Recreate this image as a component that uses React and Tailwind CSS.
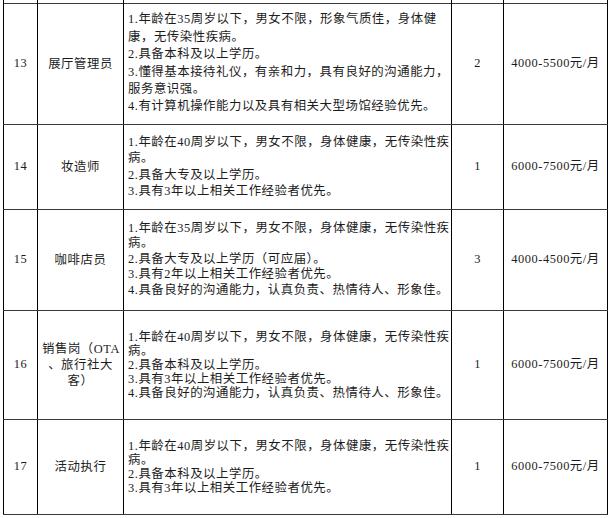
const rows = [
  {
    no: "13",
    name: ["展厅管理员"],
    lines: [
      "1.年龄在35周岁以下，男女不限，形象气质佳，身体健",
      "康，无传染性疾病。",
      "2.具备本科及以上学历。",
      "3.懂得基本接待礼仪，有亲和力，具有良好的沟通能力，",
      "服务意识强。",
      "4.有计算机操作能力以及具有相关大型场馆经验优先。",
    ],
    count: "2",
    pay: "4000-5500元/月",
    h: "h-[121px]",
    lh: "leading-[17.4px]",
  },
  {
    no: "14",
    name: ["妆造师"],
    lines: [
      "1.年龄在40周岁以下，男女不限，身体健康，无传染性疾",
      "病。",
      "2.具备大专及以上学历。",
      "3.具有3年以上相关工作经验者优先。",
    ],
    count: "1",
    pay: "6000-7500元/月",
    h: "h-[85px]",
    lh: "leading-[16.3px]",
  },
  {
    no: "15",
    name: ["咖啡店员"],
    lines: [
      "1.年龄在35周岁以下，男女不限，身体健康，无传染性疾",
      "病。",
      "2.具备大专及以上学历（可应届）。",
      "3.具有2年以上相关工作经验者优先。",
      "4.具备良好的沟通能力，认真负责、热情待人、形象佳。",
    ],
    count: "3",
    pay: "4000-4500元/月",
    h: "h-[101px]",
    lh: "leading-[15.5px]",
  },
  {
    no: "16",
    name: ["销售岗（OTA", "、旅行社大", "客）"],
    lines: [
      "1.年龄在40周岁以下，男女不限，身体健康，无传染性疾",
      "病。",
      "2.具备本科及以上学历。",
      "3.具有3年以上相关工作经验者优先。",
      "4.具备良好的沟通能力，认真负责、热情待人、形象佳。",
    ],
    count: "1",
    pay: "6000-7500元/月",
    h: "h-[109px]",
    lh: "leading-[14px]",
  },
  {
    no: "17",
    name: ["活动执行"],
    lines: [
      "1.年龄在40周岁以下，男女不限，身体健康，无传染性疾",
      "病。",
      "2.具备本科及以上学历。",
      "3.具有3年以上相关工作经验者优先。",
    ],
    count: "1",
    pay: "6000-7500元/月",
    h: "h-[95px]",
    lh: "leading-[14px]",
  },
];

export default function App() {
  return (
    <div
      className="w-[609px] h-[518px] bg-white pl-[3px] overflow-hidden text-[12.4px] tracking-[0.55px] text-[#1c1c1c]"
      style={{ fontFamily: '"Liberation Serif", "Noto Sans CJK SC", serif' }}
    >
      <table className="border-collapse table-fixed w-[604px]">
        <colgroup>
          <col className="w-[34px]" />
          <col className="w-[86px]" />
          <col className="w-[328px]" />
          <col className="w-[52px]" />
          <col className="w-[104px]" />
        </colgroup>
        <tbody>
          {/* tail of the previous row */}
          <tr className="h-[3px]">
            <td className="border-x border-black p-0" />
            <td className="border-x border-black p-0" />
            <td className="border-x border-black p-0" />
            <td className="border-x border-black p-0" />
            <td className="border-x border-black p-0" />
          </tr>
          {rows.map((r) => (
            <tr key={r.no} className={r.h}>
              <td className="border-x border-y border-x-black border-y-[#3a3a3a] p-0 text-center align-middle">{r.no}</td>
              <td className="border-x border-y border-x-black border-y-[#3a3a3a] px-1 text-center align-middle leading-[16px]">
                {r.name.map((n) => (
                  <div key={n} className="whitespace-nowrap">{n}</div>
                ))}
              </td>
              <td className={`border-x border-y border-x-black border-y-[#3a3a3a] pl-[4px] pr-1 align-middle ${r.lh}`}>
                {r.lines.map((l, i) => (
                  <div key={i} className="whitespace-nowrap">{l}</div>
                ))}
              </td>
              <td className="border-x border-y border-x-black border-y-[#3a3a3a] p-0 text-center align-middle">{r.count}</td>
              <td className="border-x border-y border-x-black border-y-[#3a3a3a] p-0 text-center align-middle whitespace-nowrap">{r.pay}</td>
            </tr>
          ))}
        </tbody>
      </table>
    </div>
  );
}
